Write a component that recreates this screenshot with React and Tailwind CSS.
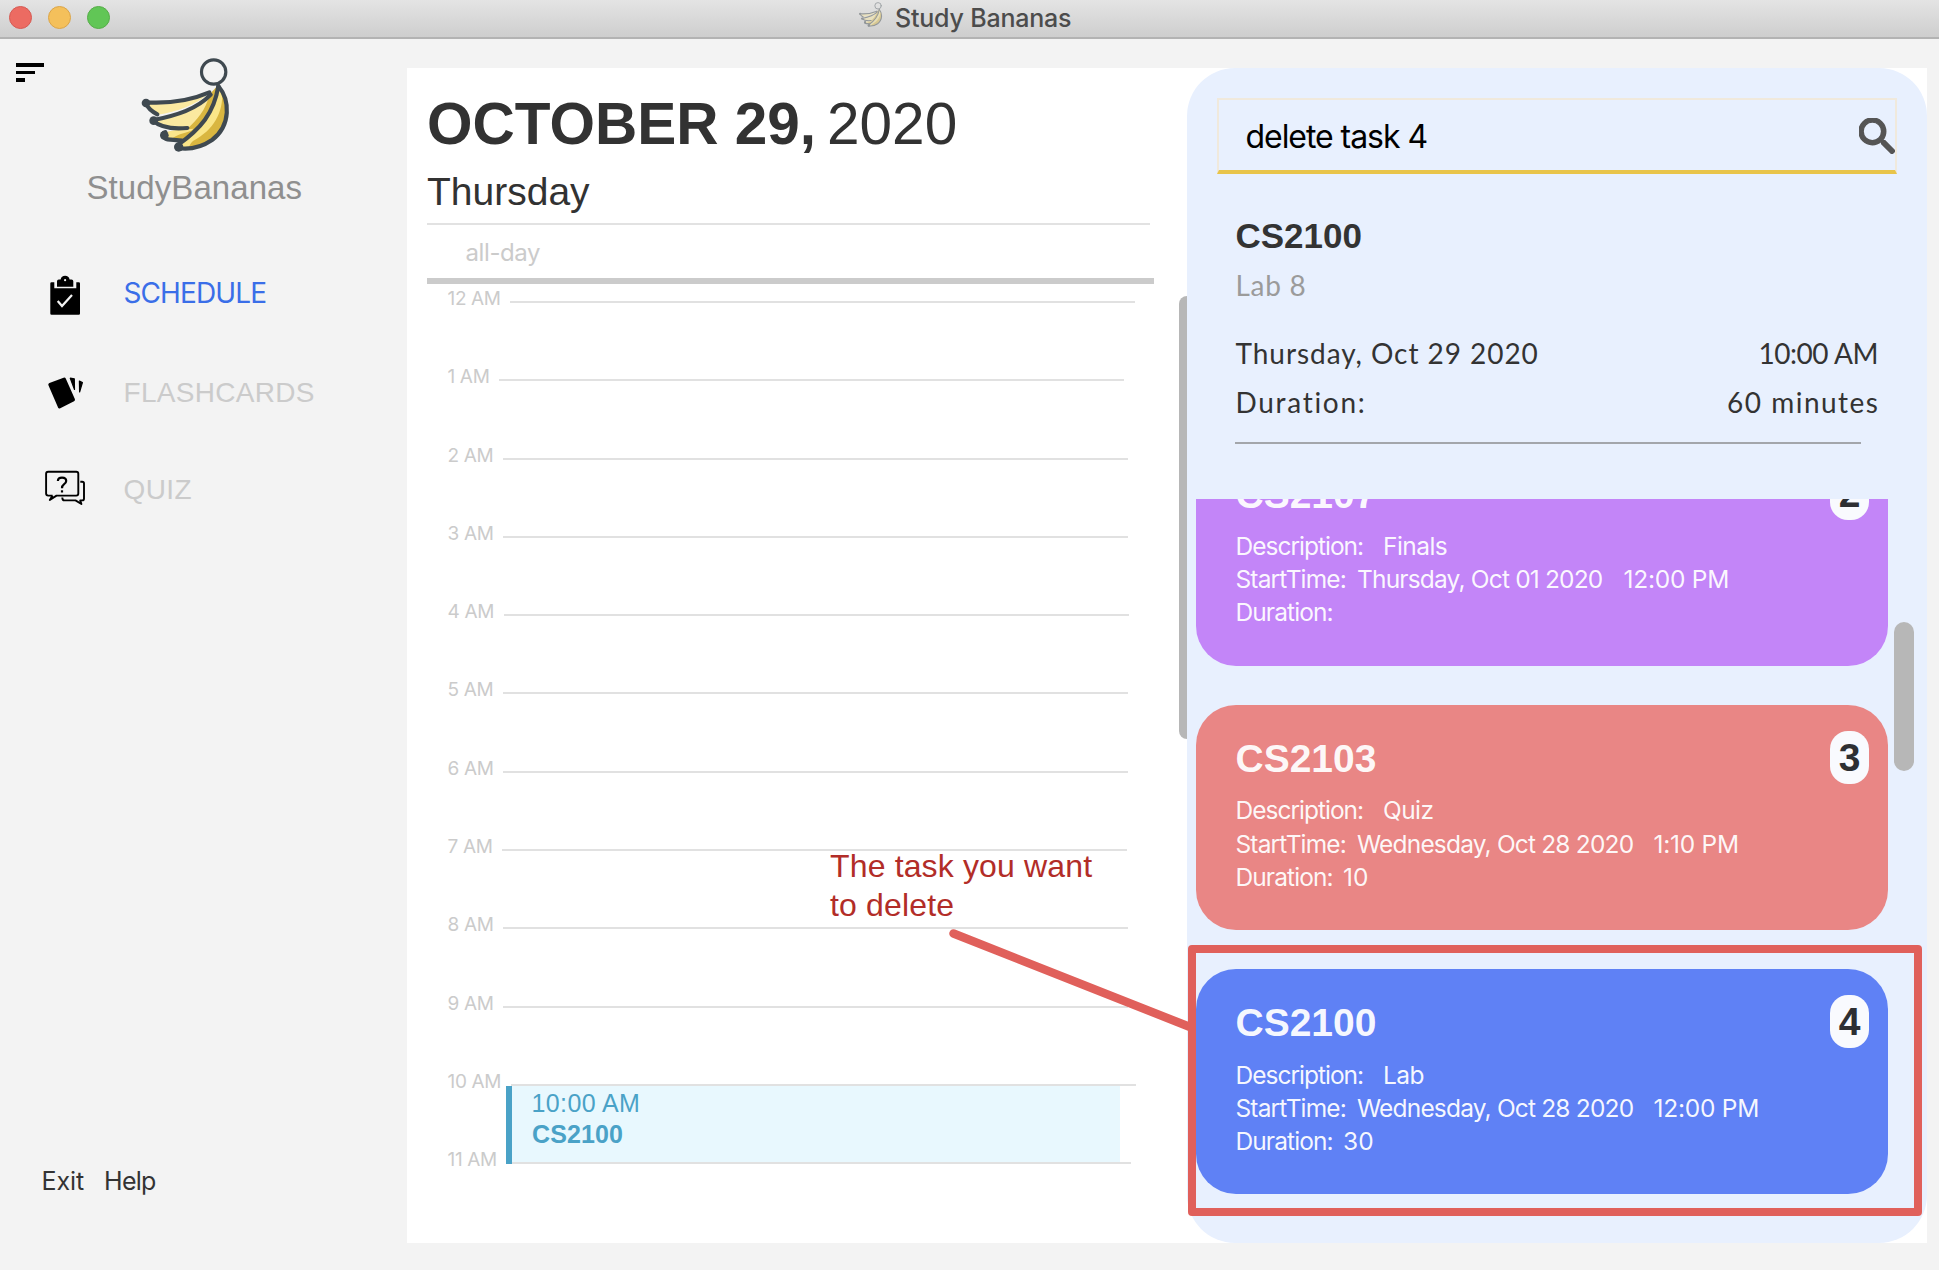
const HOURS = ["12 AM", "1 AM", "2 AM", "3 AM", "4 AM", "5 AM", "6 AM", "7 AM", "8 AM", "9 AM", "10 AM", "11 AM"];

const TASKS = [
  { id: 2, title: "CS2107", description: "Finals", date: "Thursday, Oct 01 2020", time: "12:00 PM", duration: "", color: "bg-[#c385f8]", dateWidth: "w-[266.500px]" },
  { id: 3, title: "CS2103", description: "Quiz", date: "Wednesday, Oct 28 2020", time: "1:10 PM", duration: "10", color: "bg-[#e98685]", dateWidth: "w-[296.500px]" },
  { id: 4, title: "CS2100", description: "Lab", date: "Wednesday, Oct 28 2020", time: "12:00 PM", duration: "30", color: "bg-[#5f81f5]", dateWidth: "w-[296.500px]" },
];

function BananaLogo({ className }) {
  return (
    <svg viewBox="0 0 330 330" className={className} fill="none" strokeLinecap="round" strokeLinejoin="round">
      <path d="M46 158 C110 162 180 152 238 128 C200 165 140 185 84 194 C68 186 54 174 46 158Z" fill="#fbe9a0" />
      <path d="M68 210 C140 196 205 176 262 108 C262 160 240 210 178 242 L172 234 C130 238 92 232 68 210Z" fill="#fbe9a0" />
      <path d="M262 108 C262 160 240 210 190 246 L172 236 C200 210 228 180 238 134Z" fill="#d9b640" />
      <path d="M98 250 C125 238 150 240 190 236 L158 274 C130 272 110 270 98 250Z" fill="#fae58d" />
      <path d="M128 264 C150 250 165 250 190 240 L158 276 L130 272Z" fill="#d9b640" />
      <path d="M266 106 C300 160 304 226 246 270 C214 292 180 298 142 292 C210 236 252 190 266 106Z" fill="#fae689" />
      <path d="M277 122 C300 170 298 228 246 268 C220 288 200 294 176 295 C180 282 184 276 190 272 C250 240 280 190 277 122Z" fill="#d9b640" />
      <g stroke="#3f4950" strokeWidth="12.500">
        <circle cx="251" cy="66" r="36.500" strokeWidth="9.500" />
        <path d="M46 157 C110 161 180 152 238 127" />
        <path d="M46 158 C54 176 68 186 82 193" />
        <path d="M68 211 C140 196 200 178 242 134" />
        <path d="M68 211 C90 232 130 238 172 234" />
        <path d="M106 246 C90 248 100 270 122 269 L156 272" />
        <path d="M265 108 C252 190 212 236 142 286" />
        <path d="M265 108 C300 150 304 226 246 270 C214 292 180 300 142 294" />
      </g>
      <circle cx="48" cy="159" r="13" fill="#3f4950" />
      <circle cx="71" cy="212" r="13" fill="#3f4950" />
      <circle cx="103" cy="256" r="13" fill="#3f4950" />
      <circle cx="146" cy="291" r="14" fill="#3f4950" />
    </svg>
  );
}

function ScheduleIcon() {
  return (
    <svg viewBox="0 0 40 44" className="h-[44px] w-[40px]">
      <path d="M6.500 10.300H9.300V16.300H31.300V10.300H33.800Q35 10.300 35 11.500V41.500Q35 42.700 33.800 42.700H6.500Q5.300 42.700 5.300 41.500V11.500Q5.300 10.300 6.500 10.300Z" />
      <path d="M12 14.700V9.200Q12 7.400 13.800 7.400H15.600A4.600 4.600 0 0 1 24.600 7.400H26.500Q28.300 7.400 28.300 9.200V14.700Z" />
      <circle cx="20.100" cy="8.200" r="1.100" fill="#f3f3f3" />
      <path d="M12.700 29 L17 34 L27 23" fill="none" stroke="#f3f3f3" strokeWidth="2.200" />
    </svg>
  );
}

function FlashcardsIcon() {
  return (
    <svg viewBox="0 0 40 44" className="h-[44px] w-[40px]" stroke="black" strokeLinejoin="round">
      <path d="M5 13.500 L19.200 8.300 L28.300 28.800 L14.500 35.700Z" strokeWidth="3.400" />
      <path d="M25.300 7.200 L29.300 7.800 L29.500 18.500Z" strokeWidth="1.200" />
      <path d="M34.400 10 L37.400 11.500 L34.600 21Z" strokeWidth="1.200" />
    </svg>
  );
}

function QuizIcon() {
  return (
    <svg viewBox="0 0 40 44" className="h-[44px] w-[40px]" fill="none" stroke="black" strokeWidth="1.900" strokeLinejoin="round">
      <path d="M7.600 26.600H3.200Q1.100 26.600 1.100 24.500V4.700Q1.100 2.700 3.200 2.700H31.300Q33.300 2.700 33.300 4.700V24.500Q33.300 26.600 31.300 26.600H11.500L4.800 31L7.600 26.600" />
      <path d="M35.300 12.700H37.200Q39 12.700 39 14.500V29.500Q39 31.400 37.200 31.400H35.200L36.400 35L30.500 31.400H19.500Q17.300 31.400 17.300 28.400" />
      <path d="M12.900 12Q12.900 8.600 17 8.600Q21.200 8.600 21.200 12Q21.200 13.800 18.900 15.400Q17 16.700 17 19.300" strokeWidth="2.200" />
      <path d="M17 21.300V23.500" strokeWidth="2.200" />
    </svg>
  );
}

function TitleBar() {
  return (
    <header className="flex h-[39px] shrink-0 items-start border-b-2 border-[#b3b3b3] bg-gradient-to-b from-[#e4e4e4] to-[#cecece]">
      <div className="flex gap-[15.500px] pt-[5.500px] pl-[8.500px]">
        <span className="size-[23.500px] rounded-full border border-[#d65a53] bg-[#ec6b62]" />
        <span className="size-[23.500px] rounded-full border border-[#dba549] bg-[#f4c05b]" />
        <span className="size-[23.500px] rounded-full border border-[#56ad48] bg-[#61c656]" />
      </div>
      <div className="ml-[746px] flex">
        <BananaLogo className="size-[29px] opacity-45" />
        <h1 className="ml-[10px] text-[25px] leading-[37px] font-medium tracking-[-0.200px] text-[#4c4c4c]">Study Bananas</h1>
      </div>
    </header>
  );
}

function NavItem({ icon, label, className }) {
  return (
    <div className="flex h-[98.500px] items-start pl-[45px]">
      {icon}
      <span className={`ml-[38.500px] text-[28px] leading-[36px] ${className}`}>{label}</span>
    </div>
  );
}

function Sidebar() {
  return (
    <aside className="flex w-[407px] shrink-0 flex-col">
      <div className="flex items-start">
        <div className="mt-[24px] ml-[16px] flex w-[28px] flex-col gap-[4px]">
          <span className="h-[3.500px] w-[28px] bg-black" />
          <span className="h-[3.500px] w-[19px] bg-black" />
          <span className="h-[3.500px] w-[9px] bg-black" />
        </div>
        <BananaLogo className="mt-[11px] ml-[86px] size-[110px]" />
      </div>
      <p className="mt-[8px] ml-[86.500px] font-['Liberation_Sans',sans-serif] text-[33px] leading-[40px] tracking-[0.080px] text-[#8f8f8f]">StudyBananas</p>
      <nav className="mt-[64px]">
        <NavItem icon={<ScheduleIcon />} label="SCHEDULE" className="mt-[3px] tracking-[-0.900px] text-[#3a6ee8]" />
        <NavItem icon={<FlashcardsIcon />} label="FLASHCARDS" className="mt-[4px] font-['Liberation_Sans',sans-serif] tracking-[0.300px] text-[#cbcbcb]" />
        <NavItem icon={<QuizIcon />} label="QUIZ" className="mt-[3px] font-['Liberation_Sans',sans-serif] tracking-[0.400px] text-[#cbcbcb]" />
      </nav>
      <div className="mt-auto mb-[71px] flex gap-[20px] pl-[41.500px] text-[25px] leading-[36px] text-[#333]">
        <span className="tracking-[-0.100px]">Exit</span>
        <span className="tracking-[-0.700px]">Help</span>
      </div>
    </aside>
  );
}

function HourRow({ label, children }) {
  return (
    <div className="relative flex h-[78.300px] items-start pl-[40.500px]">
      <span className="mt-[1px] text-[19px] leading-[24px] tracking-[-0.350px] whitespace-nowrap text-[#cbcbcb]">{label}</span>
      <span className="relative mt-[15px] ml-[9.500px] h-[2px] w-[625px] bg-[#e1e1e1]" />
      {children}
    </div>
  );
}

function CalendarEvent() {
  return (
    <div className="absolute top-[17px] left-[99px] h-[78px] w-[614px] bg-[#e8f8fe] pl-[25.500px] font-['Liberation_Sans',sans-serif] text-[25px] leading-[31px] text-[#4aa2c7]">
      <p className="pt-[2px] tracking-[0.400px]">10:00 AM</p>
      <p className="pl-[0.500px] font-bold tracking-[0.100px]">CS2100</p>
    </div>
  );
}

function Calendar() {
  return (
    <section className="flex w-[780px] shrink-0 flex-col pt-[26px]">
      <div className="ml-[20px] font-['Liberation_Sans',sans-serif] text-[#323232]">
        <h2 className="flex gap-[11px] text-[58.500px] leading-[60px] whitespace-nowrap">
          <b>OCTOBER 29,</b>
          <span>2020</span>
        </h2>
        <p className="mt-[16px] text-[39px] leading-[44px]">Thursday</p>
      </div>
      <div className="mt-[9px] ml-[19.500px] h-[2px] w-[723px] bg-[#e2e2e2]" />
      <div className="h-[53px] pt-[11.500px] pl-[58.500px] text-[24px] leading-[32px] tracking-[-0.400px] text-[#cbcbcb]">all-day</div>
      <div className="ml-[19.500px] h-[6px] w-[727px] bg-[#cbcbcb]" />
      <div className="flex">
        <div className="mt-[2px] flex-1">
          {HOURS.map((hour) => (
            <HourRow key={hour} label={hour}>
              {hour === "10 AM" && (
                <>
                  <CalendarEvent />
                  <span className="absolute top-[17px] left-[99px] z-10 h-[78px] w-[6px] bg-[#4aa2c7]" />
                </>
              )}
            </HourRow>
          ))}
        </div>
        <div className="mt-[11.500px] h-[443px] w-[8px] rounded-l-[8px] bg-[#b7b7b7]" />
      </div>
    </section>
  );
}

function SearchBar() {
  return (
    <div className="mt-[30px] ml-[30px] flex h-[75.500px] w-[680px] items-center justify-between border-2 border-b-4 border-[#f0e9dc] border-b-[#e8c44a] pt-[4px] pl-[26.500px]">
      <span className="text-[32px] tracking-[-1.050px] text-black">delete task 4</span>
      <svg viewBox="3 3 17.500 17.500" className="-mt-[1px] size-[36px]" fill="#555">
        <path d="M15.500 14h-.79l-.28-.27A6.471 6.471 0 0 0 16 9.500 6.500 6.500 0 1 0 9.500 16c1.610 0 3.090-.59 4.230-1.570l.27.28v.79l5 4.990L20.490 19l-4.990-5zm-6 0C7.010 14 5 11.990 5 9.500S7.010 5 9.500 5 14 7.010 14 9.500 11.990 14 9.500 14z" stroke="#555" strokeWidth=".7" strokeLinejoin="round" />
      </svg>
    </div>
  );
}

function TaskDetail() {
  return (
    <div className="mt-[40px] ml-[48.500px] w-[642.500px] font-[Lato,sans-serif] text-[28px] leading-[36px] text-[#333]">
      <h3 className="font-['Liberation_Sans',sans-serif] text-[35px] leading-[44px] font-bold">CS2100</h3>
      <p className="mt-[9px] tracking-[0.700px] text-[#9b9b9b]">Lab 8</p>
      <div className="mt-[32.500px] flex justify-between">
        <span className="tracking-[0.950px]">Thursday, Oct 29 2020</span>
        <span className="tracking-[-0.450px]">10:00 AM</span>
      </div>
      <div className="mt-[13px] flex justify-between">
        <span className="tracking-[1.700px]">Duration:</span>
        <span className="mr-[-1.500px] tracking-[1.500px]">60 minutes</span>
      </div>
      <div className="mt-[21.500px] -ml-[0.500px] h-[2.500px] w-[626px] bg-[#a3a6ab]" />
    </div>
  );
}

function TaskCard({ task }) {
  return (
    <article className={`h-[225px] shrink-0 rounded-[40px] pt-[26px] pr-[19px] pl-[39.500px] text-white/95 ${task.color}`}>
      <div className="flex items-start justify-between font-['Liberation_Sans',sans-serif] text-[39px] font-bold">
        <h4 className="mt-[6px] leading-[44px]">{task.title}</h4>
        <span className="flex h-[53px] w-[39px] items-center justify-center rounded-[18px] bg-[#f9fafe] pt-[2px] text-[#2e2f33]">{task.id}</span>
      </div>
      <div className="mt-[10.500px] text-[24.500px] leading-[33.200px] whitespace-nowrap">
        <div className="flex">
          <span className="w-[147.500px] tracking-[-1px]">Description:</span>
          <span className="tracking-[-0.550px]">{task.description}</span>
        </div>
        <div className="flex">
          <span className="w-[121.500px] tracking-[-0.850px]">StartTime:</span>
          <span className={`tracking-[-0.820px] ${task.dateWidth}`}>{task.date}</span>
          <span className="tracking-[-0.250px]">{task.time}</span>
        </div>
        <div className="flex">
          <span className="w-[107.500px] tracking-[-0.900px]">Duration:</span>
          <span>{task.duration}</span>
        </div>
      </div>
    </article>
  );
}

function TaskPanel() {
  return (
    <section className="flex w-[740px] shrink-0 flex-col rounded-[48px] bg-[#e8f0fe]">
      <SearchBar />
      <TaskDetail />
      <div className="mt-[54.500px] ml-[9px] flex min-h-0 flex-1 gap-[6px] overflow-hidden">
        <div className="mt-[-58px] flex w-[692px] flex-col gap-[39.300px]">
          {TASKS.map((task) => (
            <TaskCard key={task.id} task={task} />
          ))}
        </div>
        <div className="mt-[123.500px] h-[149px] w-[20px] rounded-full bg-[#b7b7b7]" />
      </div>
    </section>
  );
}

function Annotation() {
  return (
    <>
      <p className="absolute top-[847px] left-[830px] font-['Liberation_Sans',sans-serif] text-[32px] leading-[39px] tracking-[0.150px] text-[#b22d28]">
        The task you want
        <br />
        to delete
      </p>
      <svg className="absolute top-[924px] left-[943px] h-[113px] w-[256px]" viewBox="943 924 256 113">
        <path d="M953.500 933.500 L1190 1027" stroke="#e0605b" strokeWidth="8.500" strokeLinecap="round" />
      </svg>
      <div className="absolute top-[944.500px] left-[1188px] h-[271.500px] w-[734px] rounded-[4px] border-8 border-[#e0605b]" />
    </>
  );
}

export default function App() {
  return (
    <div className="relative flex h-[1270px] w-[1939px] flex-col overflow-hidden bg-[#f3f3f3] font-[Inter,sans-serif]">
      <TitleBar />
      <div className="flex min-h-0 flex-1">
        <Sidebar />
        <main className="mt-[29px] flex h-[1174.500px] w-[1520px] bg-white">
          <Calendar />
          <TaskPanel />
        </main>
      </div>
      <Annotation />
    </div>
  );
}
